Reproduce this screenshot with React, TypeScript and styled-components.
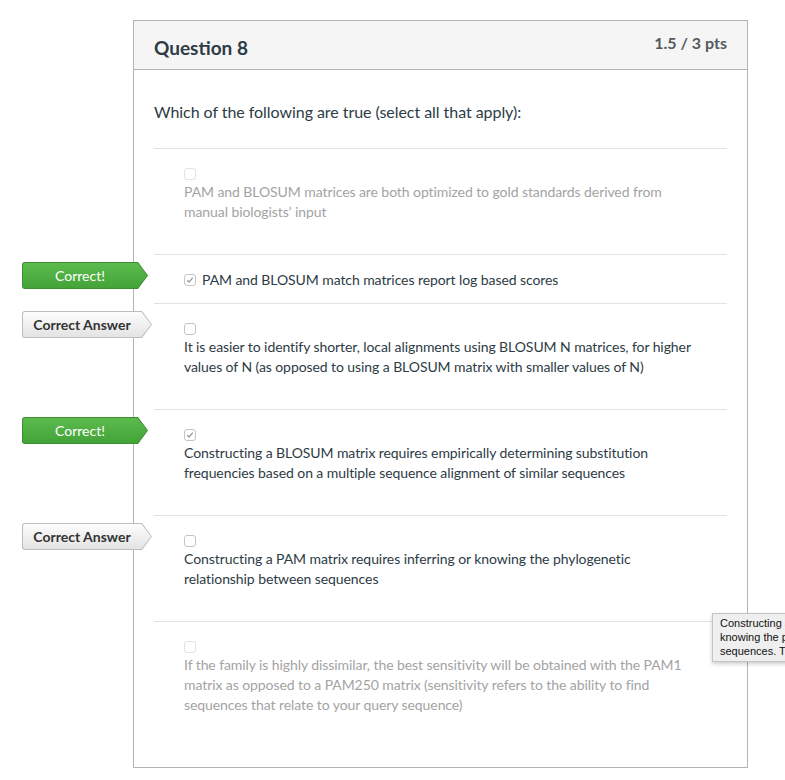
import React from "react";
import styled, { createGlobalStyle, css } from "styled-components";

const Global = createGlobalStyle`
  html, body { margin: 0; padding: 0; background: #fff; }
  body { font-family: Lato, "Open Sans", sans-serif; -webkit-font-smoothing: antialiased; }
`;

const Page = styled.div`
  position: relative;
  width: 785px;
  height: 780px;
  overflow: hidden;
  box-sizing: border-box;
  padding: 20px 0 0 133px;
  background: #fff;
`;

const Card = styled.section`
  width: 615px;
  box-sizing: border-box;
  border: 1px solid #b3b3b3;
  background: #fff;
`;

const Header = styled.header`
  display: flex;
  justify-content: space-between;
  align-items: flex-start;
  height: 49px;
  box-sizing: border-box;
  padding: 12px 20px 0;
  background: #f5f5f5;
  border-bottom: 1px solid #b3b3b3;
`;

const Title = styled.h2`
  margin: 5px 0 0;
  font-size: 19px;
  line-height: 20px;
  font-weight: 700;
  color: #2d3b45;
`;

const Points = styled.div`
  font-size: 16px;
  line-height: 20px;
  font-weight: 700;
  color: #555a5e;
`;

const Content = styled.div`
  padding: 32px 20px 20px;
`;

const QuestionText = styled.p`
  margin: 0 0 26px;
  font-size: 16px;
  line-height: 20px;
  letter-spacing: -0.05px;
  color: #2d3b45;
`;

const AnswerList = styled.div`
  display: flex;
  flex-direction: column;
`;

const Answer = styled.div<{ $inline?: boolean }>`
  position: relative;
  border-top: 1px solid #e2e2e2;
  padding: 19px 0 32px 30px;
  ${(p) =>
    p.$inline &&
    css`
      display: flex;
      align-items: center;
      gap: 6px;
      padding: 15px 0 13px 30px;
    `}
`;

const Box = styled.span<{ $muted?: boolean }>`
  display: flex;
  align-items: center;
  justify-content: center;
  width: 12px;
  height: 12px;
  box-sizing: border-box;
  border: 1px solid ${(p) => (p.$muted ? "#e3e3e3" : "#c4c4c4")};
  border-radius: 3px;
  background: #fff;
  margin-bottom: 2px;
  flex: none;
`;

const InlineBox = styled(Box)`
  margin-bottom: 0;
`;

const AnswerText = styled.div<{ $muted?: boolean }>`
  font-size: 14px;
  line-height: 20px;
  letter-spacing: -0.08px;
  color: ${(p) => (p.$muted ? "#a3a3a3" : "#2d3b45")};
  max-width: 515px;
`;

const labelShape = "polygon(0 0, calc(100% - 10px) 0, 100% 50%, calc(100% - 10px) 100%, 0 100%)";

const Label = styled.div<{ $kind: "correct" | "answer" }>`
  position: absolute;
  left: -132px;
  top: 7px;
  height: 27px;
  box-sizing: border-box;
  display: flex;
  align-items: center;
  padding-right: 10px;
  font-size: 14px;
  border-radius: 3px 0 0 3px;
  clip-path: ${labelShape};
  z-index: 2;
  ${(p) =>
    p.$kind === "correct"
      ? css`
          width: 126px;
          background: #3b8f2f;
          color: #fff;
          font-weight: 400;
        `
      : css`
          width: 130px;
          background: #bdbdbd;
          color: #333;
          font-weight: 700;
        `}
  &::before {
    content: "";
    position: absolute;
    inset: 1px;
    border-radius: 2px 0 0 2px;
    clip-path: polygon(0 0, calc(100% - 9.6px) 0, 100% 50%, calc(100% - 9.6px) 100%, 0 100%);
    background: ${(p) =>
      p.$kind === "correct"
        ? "linear-gradient(#5cbb4d, #44a338)"
        : "linear-gradient(#fdfdfd, #e3e3e3)"};
  }
`;

const LabelText = styled.span`
  position: relative;
  flex: 1;
  text-align: center;
  line-height: 20px;
`;

const Tooltip = styled.div`
  position: absolute;
  left: 712px;
  top: 613px;
  width: 280px;
  box-sizing: border-box;
  padding: 2px 7px 3px;
  background: #efefef;
  border: 1px solid #c4c4c4;
  box-shadow: 0 2px 4px rgba(0, 0, 0, 0.2);
  font-family: "Liberation Sans", Arial, sans-serif;
  font-size: 11px;
  line-height: 14px;
  color: #111;
  white-space: nowrap;
  z-index: 5;
`;

const Check = () => (
  <svg width="8" height="8" viewBox="0 0 8 8">
    <polyline points="1.2,4.2 3.1,6 6.8,1.6" fill="none" stroke="#9a9a9a" strokeWidth="1.3" />
  </svg>
);

type Item = {
  text: string;
  checked?: boolean;
  muted?: boolean;
  inline?: boolean;
  label?: "correct" | "answer";
};

const items: Item[] = [
  {
    text: "PAM and BLOSUM matrices are both optimized to gold standards derived from manual biologists\u2019 input",
    muted: true,
  },
  {
    text: "PAM and BLOSUM match matrices report log based scores",
    checked: true,
    inline: true,
    label: "correct",
  },
  {
    text: "It is easier to identify shorter, local alignments using BLOSUM N matrices, for higher values of N (as opposed to using a BLOSUM matrix with smaller values of N)",
    label: "answer",
  },
  {
    text: "Constructing a BLOSUM matrix requires empirically determining substitution frequencies based on a multiple sequence alignment of similar sequences",
    checked: true,
    label: "correct",
  },
  {
    text: "Constructing a PAM matrix requires inferring or knowing the phylogenetic relationship between sequences",
    label: "answer",
  },
  {
    text: "If the family is highly dissimilar, the best sensitivity will be obtained with the PAM1 matrix as opposed to a PAM250 matrix (sensitivity refers to the ability to find sequences that relate to your query sequence)",
    muted: true,
  },
];

export default function App() {
  return (
    <>
      <Global />
      <Page>
        <Card>
          <Header>
            <Title>Question 8</Title>
            <Points>1.5 / 3 pts</Points>
          </Header>
          <Content>
            <QuestionText>Which of the following are true (select all that apply):</QuestionText>
            <AnswerList>
              {items.map((it, i) => (
                <Answer key={i} $inline={it.inline}>
                  {it.label && (
                    <Label $kind={it.label}>
                      <LabelText>{it.label === "correct" ? "Correct!" : "Correct Answer"}</LabelText>
                    </Label>
                  )}
                  {it.inline ? (
                    <InlineBox $muted={it.muted}>{it.checked && <Check />}</InlineBox>
                  ) : (
                    <Box $muted={it.muted}>{it.checked && <Check />}</Box>
                  )}
                  <AnswerText $muted={it.muted}>{it.text}</AnswerText>
                </Answer>
              ))}
            </AnswerList>
          </Content>
        </Card>
        <Tooltip>
          Constructing a PAM matrix requires inferring or
          <br />
          knowing the phylogenetic relationship between
          <br />
          sequences. This answer is correct.
        </Tooltip>
      </Page>
    </>
  );
}
